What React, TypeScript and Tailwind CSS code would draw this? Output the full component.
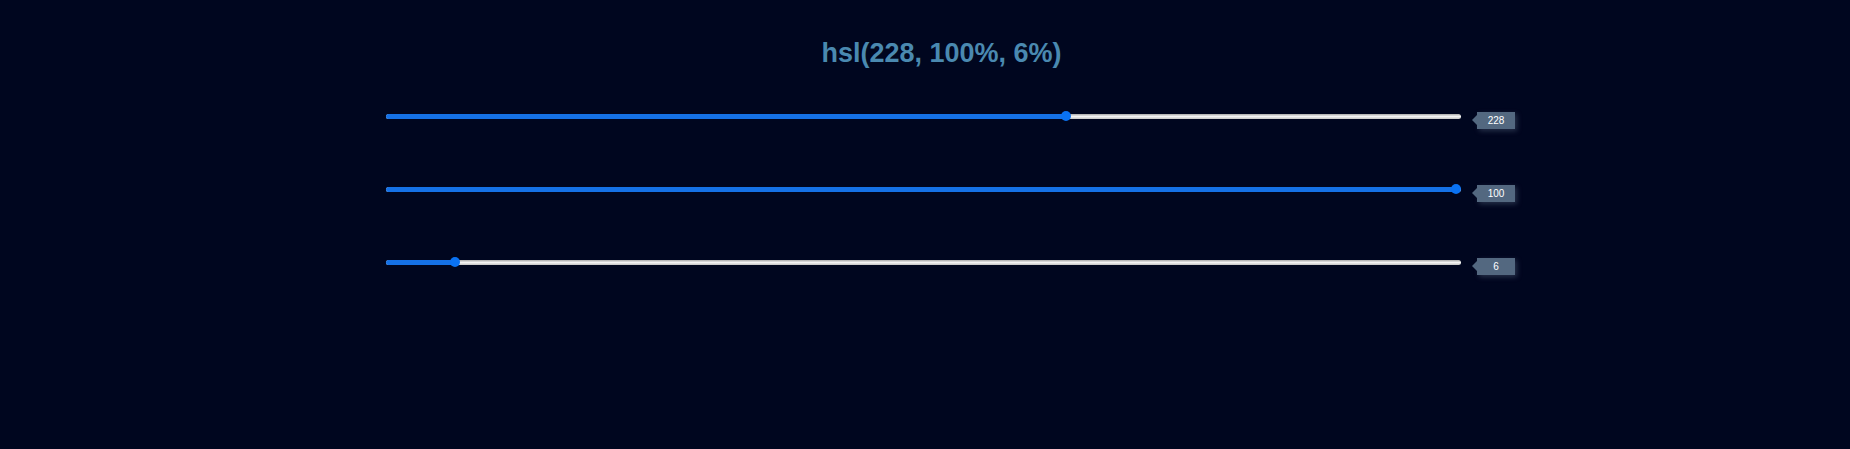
const channels = [
  { key: 'h', value: 228, max: 360 },
  { key: 's', value: 100, max: 100 },
  { key: 'l', value: 6, max: 100 },
];

const TRACK_W = 1075;
const THUMB = 10;

function Slider({ value, max }: { value: number; max: number }) {
  const pos = THUMB / 2 + (value / max) * (TRACK_W - THUMB);

  return (
    <div className="flex h-[18px] items-center">
      <div className="relative h-[5px] w-[1075px] rounded-full bg-gradient-to-b from-[#a9a9a9] via-[#f4f4f4] to-[#c4c4c4]">
        <div className="absolute left-0 top-0 h-full rounded-full bg-[#1571e6]" style={{ width: pos }} />
        <div
          className="absolute top-1/2 h-[10px] w-[10px] -translate-y-1/2 rounded-full bg-[#0a72f2]"
          style={{ left: pos - THUMB / 2 }}
        />
      </div>
      <div className="relative ml-[16px] flex h-[17px] w-[38px] translate-y-[4px] items-center justify-center bg-[#536880] text-[10px] text-white shadow-[2px_2px_5px_rgba(110,130,155,0.35)]">
        <span className="absolute left-[-5px] top-1/2 h-0 w-0 -translate-y-1/2 border-y-[5px] border-r-[5px] border-y-transparent border-r-[#536880]" />
        {value}
      </div>
    </div>
  );
}

export default function App() {
  return (
    <div className="min-h-[449px] w-full bg-[#00061f] font-['Liberation_Sans',Arial,sans-serif]">
      <h1 className="pl-[33px] pt-[37px] text-center text-[27px] font-bold leading-[32px] text-[#4a89b0]">
        hsl(228, 100%, 6%)
      </h1>
      <div className="mt-[38px] flex flex-col gap-[55px] pl-[386px]">
        {channels.map((c) => (
          <Slider key={c.key} value={c.value} max={c.max} />
        ))}
      </div>
    </div>
  );
}
